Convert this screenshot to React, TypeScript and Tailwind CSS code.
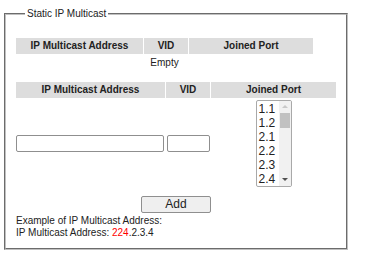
import { useState } from "react"

const ports = ["1.1", "1.2", "2.1", "2.2", "2.3", "2.4"]

const PortList = () => {
    const [picked, setPicked] = useState<string[]>([])
    const toggle = (p: string) =>
        setPicked((prev) => (prev.includes(p) ? prev.filter((x) => x !== p) : [...prev, p]))

    return (
        <div className="flex w-[36px] h-[87px] border border-[#a9a9a9] rounded-[2px] bg-white overflow-hidden">
            <ul className="flex-1 pl-[2px] pt-[1px] overflow-hidden">
                {ports.map((p) => (
                    <li
                        key={p}
                        onClick={() => toggle(p)}
                        className={`h-[14px] leading-[14px] text-[12px] cursor-default ${picked.includes(p) ? "bg-[#cecece]" : ""}`}
                    >
                        {p}
                    </li>
                ))}
            </ul>
            <div className="w-[12px] bg-[#f1f1f1] flex flex-col items-center">
                <div className="h-[12px] w-full flex items-center justify-center">
                    <div className="w-0 h-0 border-x-[3px] border-x-transparent border-b-[3px] border-b-[#c8c8c8]" />
                </div>
                <div className="w-[10px] h-[15px] bg-[#c1c1c1]" />
                <div className="flex-1" />
                <div className="h-[12px] w-full flex items-center justify-center">
                    <div className="w-0 h-0 border-x-[3px] border-x-transparent border-t-[3px] border-t-[#505050]" />
                </div>
            </div>
        </div>
    )
}

export default function App() {
    const [addr, setAddr] = useState("")
    const [vid, setVid] = useState("")

    return (
        <div
            className="w-[366px] h-[271px] bg-white pl-[4px] pt-[7px] text-[10px] text-[#222]"
            style={{ fontFamily: '"Liberation Sans", Arial, sans-serif' }}
        >
            <fieldset className="w-[344px] h-[243px] border-2 [border-style:groove] border-[#c0c0c0] px-[10px]">
                <legend className="ml-[9px] px-[2px] leading-[14px]">Static IP Multicast</legend>

                <div className="mt-[17px] w-[297px]">
                    <div className="flex gap-[1px] h-[16px] font-bold leading-[16px] text-center">
                        <div className="w-[127px] bg-[#dddddd]">IP Multicast Address</div>
                        <div className="w-[44px] bg-[#dddddd]">VID</div>
                        <div className="flex-1 bg-[#dddddd]">Joined Port</div>
                    </div>
                    <div className="h-[17px] leading-[17px] text-center">Empty</div>
                </div>

                <div className="mt-[11px] w-[320px]">
                    <div className="flex gap-[1px] h-[16px] font-bold leading-[16px] text-center">
                        <div className="w-[149px] bg-[#dddddd]">IP Multicast Address</div>
                        <div className="w-[44px] bg-[#dddddd]">VID</div>
                        <div className="flex-1 bg-[#dddddd]">Joined Port</div>
                    </div>
                    <div className="flex gap-[1px] items-center h-[90px]">
                        <div className="w-[149px]">
                            <input
                                value={addr}
                                onChange={(e) => setAddr(e.target.value)}
                                className="w-[148px] h-[17px] border border-[#8f8f8f] rounded-[2px] px-[2px] text-[11px] outline-none"
                            />
                        </div>
                        <div className="w-[44px] flex justify-center">
                            <input
                                value={vid}
                                onChange={(e) => setVid(e.target.value)}
                                className="w-[43px] h-[17px] border border-[#8f8f8f] rounded-[2px] px-[2px] text-[11px] outline-none"
                            />
                        </div>
                        <div className="flex-1 flex justify-center">
                            <PortList />
                        </div>
                    </div>
                    <div className="flex justify-center mt-[8px]">
                        <button className="w-[70px] h-[17px] border border-[#8f8f8f] rounded-[2px] bg-[#efefef] text-[12px] leading-[15px]">
                            Add
                        </button>
                    </div>
                </div>

                <div className="mt-[2px] leading-[12px]">
                    <div>Example of IP Multicast Address:</div>
                    <div>
                        IP Multicast Address: <span className="text-[#ff0000]">224</span>.2.3.4
                    </div>
                </div>
            </fieldset>
        </div>
    )
}
